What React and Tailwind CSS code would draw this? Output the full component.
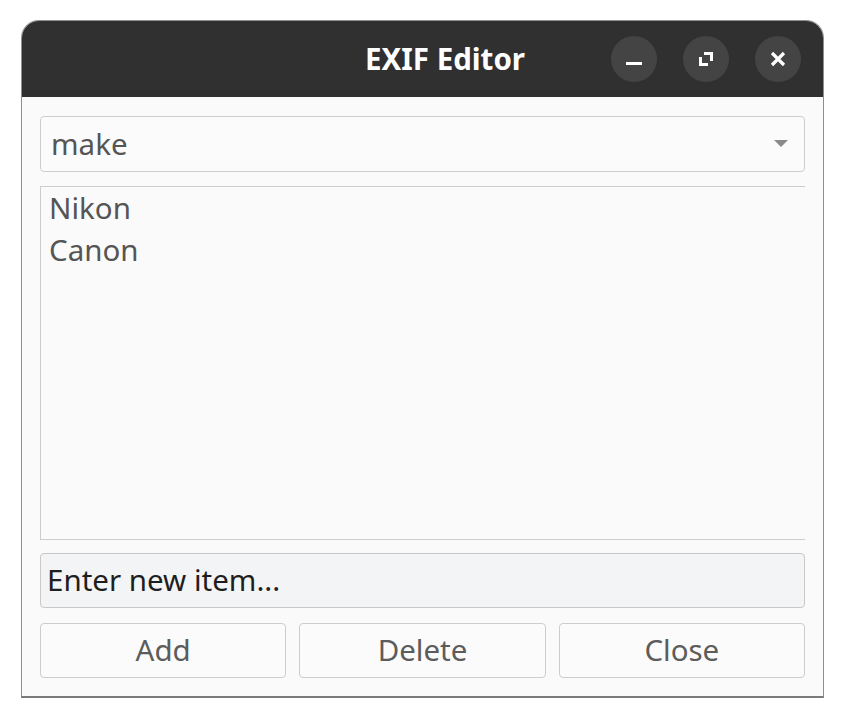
import React, { useState } from 'react';

const font = { fontFamily: '"Noto Sans", "Open Sans", sans-serif' };

function MinimizeIcon() {
  return (
    <svg width="20" height="20" viewBox="0 0 20 20">
      <rect x="2" y="13" width="16" height="3" fill="#ffffff" />
    </svg>
  );
}

function RestoreIcon() {
  return (
    <svg width="20" height="20" viewBox="0 0 20 20">
      <path d="M8 3h9v9h-3V6H8z" fill="#ffffff" />
      <path d="M3 8h3v6h6v3H3z" fill="#ffffff" />
    </svg>
  );
}

function CloseIcon() {
  return (
    <svg width="20" height="20" viewBox="0 0 20 20">
      <path d="M4 4L16 16M16 4L4 16" stroke="#ffffff" strokeWidth="3.2" strokeLinecap="butt" />
    </svg>
  );
}

function TitleButton({ children }) {
  return (
    <div className="w-[46px] h-[46px] rounded-full bg-[#444444] flex items-center justify-center">
      {children}
    </div>
  );
}

export default function App() {
  const [items] = useState(['Nikon', 'Canon']);
  const [entry, setEntry] = useState('Enter new item...');

  return (
    <div className="w-[844px] h-[720px] bg-white pt-[20px] pl-[21px]" style={font}>
      <div className="w-[803px] h-[678px] flex flex-col rounded-t-[18px] overflow-hidden border border-[#8f8f8f] border-b-2 border-b-[#7a7a7a] bg-[#fafafa]">
        {/* header bar */}
        <div className="h-[76px] shrink-0 bg-[#303030] flex items-center">
          <div className="ml-[343px] text-[29.5px] font-bold text-white leading-none -mt-[1px]">EXIF Editor</div>
          <div className="ml-auto mr-[22px] flex items-center gap-[26px]">
            <TitleButton><MinimizeIcon /></TitleButton>
            <TitleButton><RestoreIcon /></TitleButton>
            <TitleButton><CloseIcon /></TitleButton>
          </div>
        </div>

        {/* body */}
        <div className="flex-1 flex flex-col px-[18px] pt-[19px] pb-[18px]">
          <div className="h-[56px] shrink-0 rounded-[4px] border border-[#cdcdcd] bg-[#fbfbfb] flex items-center pl-[10px] pr-[16px]">
            <span className="text-[29.5px] text-[#555555]">make</span>
            <svg className="ml-auto" width="14" height="8" viewBox="0 0 14 8">
              <path d="M0 0h14L7 7z" fill="#8a8a8a" />
            </svg>
          </div>

          <div className="mt-[14px] h-[354px] shrink-0 border-t border-l border-b border-[#cdcdcd] bg-[#fafafa] pl-[8px]">
            {items.map((item) => (
              <div key={item} className="text-[29.5px] leading-[42px] text-[#555555]">{item}</div>
            ))}
          </div>

          <div className="mt-[13px] h-[55px] shrink-0 rounded-[4px] border border-[#c8c8c8] bg-[#f3f4f5] flex items-center pl-[6px]">
            <input
              value={entry}
              onChange={(e) => setEntry(e.target.value)}
              className="w-full bg-transparent outline-none text-[29.5px] text-[#1e1e1e]"
              style={font}
            />
          </div>

          <div className="mt-[15px] grid grid-cols-3 gap-[13px]">
            {['Add', 'Delete', 'Close'].map((label) => (
              <button
                key={label}
                className="h-[55px] rounded-[4px] border border-[#cdcdcd] bg-[#fbfbfb] text-[29.5px] text-[#5c5c5c]"
                style={font}
              >
                {label}
              </button>
            ))}
          </div>
        </div>
      </div>
    </div>
  );
}
